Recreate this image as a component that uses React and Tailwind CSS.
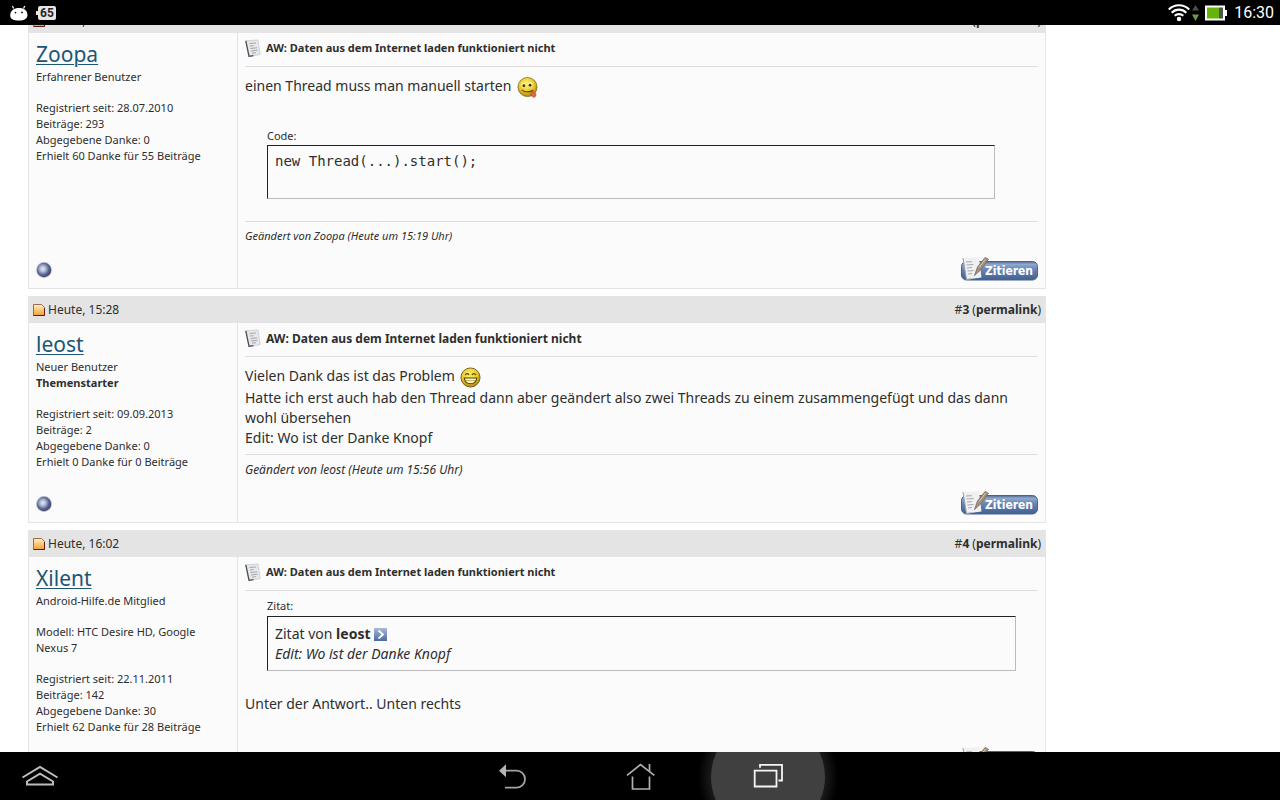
const SUBJECT = "AW: Daten aus dem Internet laden funktioniert nicht";

function StatusBar() {
  return (
    <header className="flex h-[25px] shrink-0 items-center justify-between bg-black pl-2 pr-[6px] text-white">
      <div className="flex items-center gap-1.5">
        <svg width="22" height="18" viewBox="0 0 22 18" aria-hidden="true">
          <path d="M5.500 4.500L4.500 2M15.500 4.500L16.800 2" stroke="#fff" strokeWidth="1.200" />
          <path
            d="M2.200 11.500C2.200 6.500 6 4 11 4s8.500 2.500 8.500 7c0 3.500-3 5.600-8.500 5.600s-8.800-1.600-8.800-5.100z"
            fill="#fff"
          />
          <circle cx="7.500" cy="8.600" r="0.900" fill="#111" />
          <circle cx="14" cy="8.400" r="0.900" fill="#111" />
        </svg>
        <div className="flex items-center">
          <span className="h-1 w-[2px] bg-neutral-200" />
          <span className="rounded-xs bg-neutral-200 px-[2px] font-[Roboto,sans-serif] text-[12px] leading-[14px] font-bold text-neutral-800">
            65
          </span>
        </div>
      </div>
      <div className="flex items-center">
        <svg width="64" height="20" viewBox="0 0 64 20" aria-hidden="true">
          <g fill="none" stroke="#fff" strokeWidth="2.100">
            <path d="M4.800 6.400C10.300 0.800 19.700 0.800 25.200 6.400" />
            <path d="M7.700 9.700C11.800 5.600 18.200 5.600 22.300 9.700" />
            <path d="M10.700 12.800C13.100 10.500 16.900 10.500 19.300 12.800" />
          </g>
          <circle cx="15" cy="16" r="2.200" fill="#fff" />
          <path d="M28 7.500L31.500 2l3.500 5.500z" fill="#4b4b4b" />
          <path d="M28 11.500h7L31.500 18z" fill="#6b9a4a" />
          <path d="M41 2.500h20V7h2v6h-2v4.500H41z" fill="#fff" />
          <path d="M43 4.500h12v11H43z" fill="#66b30b" />
          <path d="M55 4.500h4v11h-4z" fill="#4d5548" />
        </svg>
        <span className="pl-[6px] font-[Roboto,sans-serif] text-[16px] leading-6">
          16:30
        </span>
      </div>
    </header>
  );
}

function NavBar() {
  return (
    <nav className="grid h-12 shrink-0 grid-cols-[1fr_auto_1fr] overflow-hidden bg-black">
      <button aria-label="Menü" className="w-20">
        <svg width="80" height="48" viewBox="0 0 80 48" fill="none" stroke="#bdbdbd" strokeWidth="2">
          <path d="M22.500 25.500L40 15l17.500 10.500" />
          <path d="M27 32.500v-3l13-7.800 13 7.800v3z" />
        </svg>
      </button>
      <div className="flex">
        <button aria-label="Zurück" className="w-32">
          <svg width="128" height="48" viewBox="0 0 128 48" fill="none" stroke="#a3a3a3" strokeWidth="1.800">
            <path d="M57 18.700h11.500a8.500 8.500 0 0 1 0 17H57" />
            <path d="M51 18.700l7-6.500v13z" fill="#b5b5b5" stroke="none" />
          </svg>
        </button>
        <button aria-label="Startseite" className="w-32">
          <svg width="128" height="48" viewBox="0 0 128 48" fill="none" stroke="#b0b0b0" strokeWidth="1.700">
            <path d="M51 23.300L64.500 12.500 78.300 23.300" />
            <path d="M56.500 24.500V37h17V24.500" />
            <path d="M73.500 12v7" />
          </svg>
        </button>
        <button aria-label="Letzte Apps" className="w-32">
          <svg width="128" height="48" viewBox="0 0 128 48" fill="none" className="overflow-visible">
            <defs>
              <radialGradient id="glow">
                <stop offset="0.800" stopColor="#1c1c1c" />
                <stop offset="1" stopColor="#000" />
              </radialGradient>
            </defs>
            <circle cx="64" cy="25" r="70" fill="url(#glow)" />
            <circle cx="64" cy="25" r="57" fill="#404040" />
            <g stroke="#f5f5f5" strokeWidth="1.800">
              <path d="M50.700 18.700h21.800v15.800H50.700z" />
              <path d="M56 15.800V12.900h22v15.600h-3.500" />
            </g>
          </svg>
        </button>
      </div>
    </nav>
  );
}

function NoteIcon() {
  return (
    <svg width="16" height="18" viewBox="0 0 16 18" className="shrink-0" aria-hidden="true">
      <path d="M0.800 1.800L13 1l2.200 14.500L4.500 17.500z" fill="#e6e8ea" stroke="#c3c6ca" strokeWidth="0.700" />
      <path d="M0.800 1.800L4 17.300l4.500-0.700" fill="none" stroke="#4a4d52" strokeWidth="1.300" />
      <path
        d="M4.500 4.500l6.500-0.500M5 7l3.500-0.300M5.500 9.500l6.500-0.700M6 12l6.500-0.800M7 14.200l4-0.500"
        stroke="#a3a6ab"
        strokeWidth="1"
      />
    </svg>
  );
}

function PostIcon() {
  return (
    <svg width="12" height="12" viewBox="0 0 12 12" className="shrink-0" aria-hidden="true">
      <defs>
        <linearGradient id="post" x1="0" y1="0" x2="0" y2="1">
          <stop offset="0" stopColor="#fff0c4" />
          <stop offset="1" stopColor="#f3a032" />
        </linearGradient>
      </defs>
      <path d="M0.500 0.500h8l3 3v8H0.500z" fill="url(#post)" stroke="#a06a4c" />
      <path d="M0.500 11.500h11V4" fill="none" stroke="#5c1a10" />
    </svg>
  );
}

function OfflineDot() {
  return (
    <svg width="16" height="16" viewBox="0 0 16 16" aria-label="offline" role="img">
      <defs>
        <radialGradient id="dot" cx="0.420" cy="0.420" r="0.550">
          <stop offset="0" stopColor="#e4e9f6" />
          <stop offset="0.350" stopColor="#b4bdd6" />
          <stop offset="0.750" stopColor="#5a6592" />
          <stop offset="1" stopColor="#454c72" />
        </radialGradient>
      </defs>
      <circle cx="8" cy="8" r="7.900" fill="#b9bed2" />
      <circle cx="8" cy="8" r="7.200" fill="url(#dot)" />
    </svg>
  );
}

function FaceGradient({ id }) {
  return (
    <radialGradient id={id} cx="0.450" cy="0.350" r="0.650">
      <stop offset="0" stopColor="#fff36a" />
      <stop offset="0.600" stopColor="#ecc92a" />
      <stop offset="1" stopColor="#a5821a" />
    </radialGradient>
  );
}

function TongueSmiley() {
  return (
    <svg width="21" height="21" viewBox="0 0 22 22" className="mx-[2px] inline-block align-middle" aria-hidden="true">
      <defs>
        <FaceGradient id="tongue" />
      </defs>
      <circle cx="11" cy="10.500" r="10" fill="url(#tongue)" stroke="#7d6418" strokeWidth="0.800" />
      <ellipse cx="6.800" cy="8.500" rx="2.200" ry="2.700" fill="#fff8c8" />
      <ellipse cx="14" cy="8" rx="2.200" ry="2.700" fill="#fff8c8" />
      <circle cx="7.200" cy="9.200" r="1.500" fill="#3f3208" />
      <circle cx="13.700" cy="8.700" r="1.500" fill="#3f3208" />
      <path d="M5 13.500c3 2.500 7.500 2.700 12 0.500" fill="none" stroke="#6b4b0c" strokeWidth="1.300" />
      <path
        d="M14.500 16.500c1.500-1.500 3.500-1 4.700 0.200s0.800 3.500-0.600 4.300-4.100-0.800-4.100-4.500z"
        fill="#e2673c"
        stroke="#b04425"
        strokeWidth="0.600"
      />
    </svg>
  );
}

function GrinSmiley() {
  return (
    <svg width="21" height="21" viewBox="0 0 22 22" className="mx-[2px] inline-block align-middle" aria-hidden="true">
      <defs>
        <FaceGradient id="grin" />
      </defs>
      <circle cx="11" cy="11" r="10" fill="url(#grin)" stroke="#75611c" strokeWidth="1" />
      <path
        d="M5.500 8.500c0.800-2.200 3.200-2.200 4 0M12.500 8.500c0.800-2.200 3.200-2.200 4 0"
        fill="none"
        stroke="#574607"
        strokeWidth="1.300"
      />
      <path d="M4.500 11.500h13c-0.500 4-3 6-6.500 6s-6-2-6.500-6z" fill="#fff6b8" stroke="#574607" strokeWidth="1.200" />
      <path d="M5.800 14.200h10.400" stroke="#a8923a" strokeWidth="0.700" />
    </svg>
  );
}

function GotoIcon() {
  return (
    <svg width="13" height="13" viewBox="0 0 13 13" className="inline-block align-middle">
      <defs>
        <linearGradient id="goto" x1="0" y1="0" x2="0" y2="1">
          <stop offset="0" stopColor="#a9bbd6" />
          <stop offset="1" stopColor="#4a6a9f" />
        </linearGradient>
      </defs>
      <path d="M0 0h13v13H0z" fill="url(#goto)" />
      <path d="M4.500 2.500l4.500 4-4.500 4" fill="none" stroke="#fff" strokeWidth="1.800" />
    </svg>
  );
}

function QuoteButton() {
  return (
    <button className="relative h-[26px] w-[77px] pt-1 pl-6 text-left font-['DejaVu_Sans_Condensed','DejaVu_Sans',sans-serif] text-[12px] leading-5 font-bold text-white">
      <svg width="77" height="26" viewBox="0 0 77 26" className="absolute top-0 left-0" aria-hidden="true">
        <defs>
          <linearGradient id="quote" x1="0" y1="0" x2="0" y2="1">
            <stop offset="0" stopColor="#52698f" />
            <stop offset="0.150" stopColor="#8fa9cf" />
            <stop offset="0.450" stopColor="#6685b4" />
            <stop offset="1" stopColor="#40608f" />
          </linearGradient>
        </defs>
        <rect x="0.500" y="5.500" width="76" height="18.500" rx="5" fill="url(#quote)" stroke="#4a628c" />
        <path d="M2 2l16-0.800 2.500 20.300L5.500 23.500z" fill="#eef0f1" />
        <path d="M2 2l3.500 21.500 5-0.700" fill="none" stroke="#9aa0a8" />
        <path d="M5 6l6-0.300M5.500 9l7-0.500M6 12l5-0.500M6.500 15l6-0.500M7 18l4-0.500" stroke="#a4a6a8" />
        <path d="M13.500 19.500L16.500 11 24 1.500l3.500 1.700-7.500 10.300z" fill="#a3917d" stroke="#75685a" strokeWidth="0.800" />
        <path d="M18 11.500L24.500 3" stroke="#d5c7b3" strokeWidth="1" />
      </svg>
      <span className="relative">Zitieren</span>
    </button>
  );
}

function PostHeader({ time, number }) {
  return (
    <div className="flex h-[27px] items-center justify-between bg-[#e4e4e4] px-[5px] pt-[2px] text-[12px]">
      <span className="flex items-center gap-[3px]">
        <PostIcon />
        {time}
      </span>
      <span>
        #<b>{number}</b> (
        <a href="#permalink" className="font-bold">
          permalink
        </a>
        )
      </span>
    </div>
  );
}

function Post({ time, number, user, rank, starter, model, stats, large, edited, tail, children }) {
  return (
    <article>
      <PostHeader time={time} number={number} />
      <div className="flex border border-t-0 border-[#e4e4e4] bg-[#fbfbfb]">
        <aside className="flex w-[209px] shrink-0 flex-col border-r border-[#e4e4e4] pt-[6px] pr-5 pb-[10px] pl-[7px] text-[11px] leading-4">
          <a
            href="#user"
            className="self-start text-[21px] leading-[30px] text-[#1b5674] underline decoration-1 underline-offset-2"
          >
            {user}
          </a>
          <p>{rank}</p>
          {starter && <p className="font-bold">Themenstarter</p>}
          {model && <p className="mt-[15px]">{model}</p>}
          <div className="mt-[15px]">
            {stats.map((line) => (
              <p key={line}>{line}</p>
            ))}
          </div>
          <div className="mt-auto pt-6">
            <OfflineDot />
          </div>
        </aside>
        <div className="flex min-w-0 flex-1 flex-col px-[7px] pt-[6px] pb-[6px]">
          <div className="flex h-7 items-start gap-[5px] border-b border-[#dedede]">
            <NoteIcon />
            <h2 className={large ? "text-[12px] leading-5 font-bold" : "text-[11px] leading-[18px] font-bold"}>
              {SUBJECT}
            </h2>
          </div>
          <div className="text-[14px] leading-5">{children}</div>
          {edited && (
            <p
              className={
                large
                  ? "border-t border-[#dedede] pt-[7px] text-[12px] leading-4 italic"
                  : "border-t border-[#dedede] pt-[6px] text-[11px] leading-4 italic"
              }
            >
              {edited}
            </p>
          )}
          <div className={tail ? "flex justify-end pt-8" : "flex justify-end pt-3"}>
            <QuoteButton />
          </div>
        </div>
      </div>
    </article>
  );
}

export default function App() {
  return (
    <div className="flex h-screen flex-col bg-white font-['Noto_Sans','Open_Sans',sans-serif] text-[#2e2e2e]">
      <StatusBar />
      <main className="min-h-0 flex-1 overflow-hidden">
        <div className="-mt-[19px] ml-7 flex max-w-[1018px] flex-col gap-[7px]">
          <Post
            time="Heute, 15:13"
            number={2}
            user="Zoopa"
            rank="Erfahrener Benutzer"
            stats={[
              "Registriert seit: 28.07.2010",
              "Beiträge: 293",
              "Abgegebene Danke: 0",
              "Erhielt 60 Danke für 55 Beiträge",
            ]}
            edited="Geändert von Zoopa (Heute um 15:19 Uhr)"
          >
            <p className="pt-[9px]">
              einen Thread muss man manuell starten <TongueSmiley />
            </p>
            <div className="mt-[30px] mr-[43px] mb-[22px] ml-[22px]">
              <p className="text-[11px] leading-4">Code:</p>
              <pre className="mt-px h-[54px] border border-t-[#222] border-r-[#bbb] border-b-[#bbb] border-l-[#222] px-[7px] py-[5px] font-['DejaVu_Sans_Mono',monospace] text-[14px] leading-5">
                new Thread(...).start();
              </pre>
            </div>
          </Post>
          <Post
            time="Heute, 15:28"
            number={3}
            user="leost"
            rank="Neuer Benutzer"
            starter
            large
            stats={[
              "Registriert seit: 09.09.2013",
              "Beiträge: 2",
              "Abgegebene Danke: 0",
              "Erhielt 0 Danke für 0 Beiträge",
            ]}
            edited="Geändert von leost (Heute um 15:56 Uhr)"
          >
            <p className="pt-[9px] pb-[6px]">
              Vielen Dank das ist das Problem <GrinSmiley />
              <br />
              Hatte ich erst auch hab den Thread dann aber geändert also zwei Threads zu einem
              zusammengefügt und das dann wohl übersehen
              <br />
              Edit: Wo ist der Danke Knopf
            </p>
          </Post>
          <Post
            time="Heute, 16:02"
            number={4}
            user="Xilent"
            rank="Android-Hilfe.de Mitglied"
            model="Modell: HTC Desire HD, Google Nexus 7"
            tail
            stats={[
              "Registriert seit: 22.11.2011",
              "Beiträge: 142",
              "Abgegebene Danke: 30",
              "Erhielt 62 Danke für 28 Beiträge",
            ]}
          >
            <div className="mx-[22px] mt-[7px] mb-[23px]">
              <p className="text-[11px] leading-4">Zitat:</p>
              <blockquote className="mt-[2px] border border-t-[#222] border-r-[#bbb] border-b-[#bbb] border-l-[#222] px-[7px] pt-[7px] pb-[6px]">
                Zitat von <b>leost</b>{" "}
                <a href="#post" aria-label="Beitrag anzeigen">
                  <GotoIcon />
                </a>
                <br />
                <em>Edit: Wo ist der Danke Knopf</em>
              </blockquote>
            </div>
            <p>Unter der Antwort.. Unten rechts</p>
          </Post>
        </div>
      </main>
      <NavBar />
    </div>
  );
}
